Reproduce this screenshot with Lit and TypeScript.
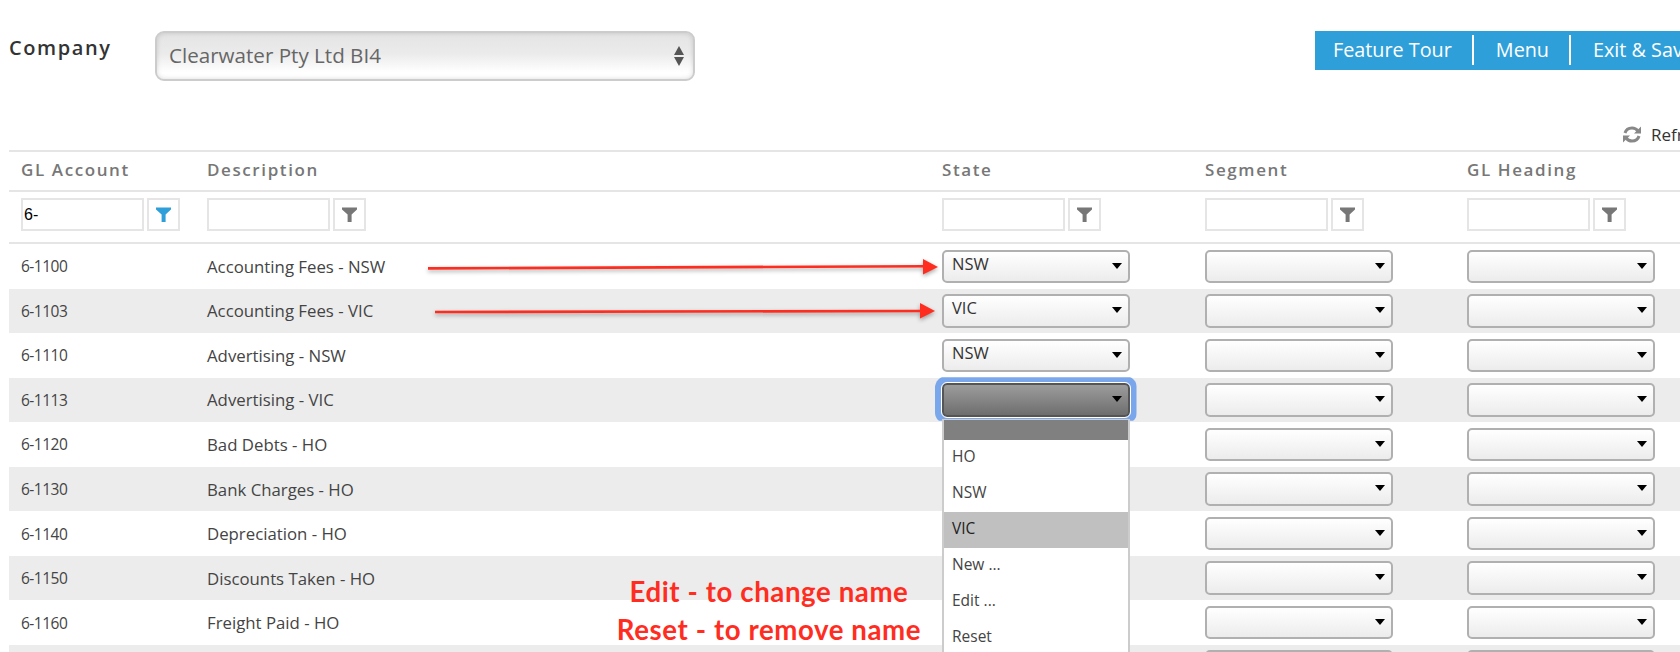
import { LitElement, html, css, svg } from "lit";
import { customElement } from "lit/decorators.js";

const ROWS: [string, string, string][] = [
  ["6-1100", "Accounting Fees - NSW", "NSW"],
  ["6-1103", "Accounting Fees - VIC", "VIC"],
  ["6-1110", "Advertising - NSW", "NSW"],
  ["6-1113", "Advertising - VIC", ""],
  ["6-1120", "Bad Debts - HO", ""],
  ["6-1130", "Bank Charges - HO", ""],
  ["6-1140", "Depreciation - HO", ""],
  ["6-1150", "Discounts Taken - HO", ""],
  ["6-1160", "Freight Paid - HO", ""],
  ["", "", ""],
];

const funnel = (active = false) => html`<svg class="funnel ${active ? "on" : ""}" viewBox="0 0 15 15" width="15" height="15"><path d="M0 0.5H15V2.5L9.6 7.5V15H5.6V7.5L0 2.5Z" fill="currentColor"/></svg>`;

@customElement("app-root")
export class AppRoot extends LitElement {
  static styles = css`
    :host { display: block; width: 1680px; height: 652px; overflow: hidden; position: relative; background: #fff;
      font-family: "Open Sans", "Noto Sans", sans-serif; color: #444; }
    .top { display: flex; align-items: flex-start; padding: 31px 0 0 9px; height: 39px; }
    .top > * { flex: none; }
    .company { width: 146px; font-size: 20px; font-weight: 600; letter-spacing: 1.6px; color: #333; line-height: 34px; }
    .csel { box-sizing: border-box; width: 540px; height: 50px; border: 2px solid #ccc; border-radius: 9px;
      background: linear-gradient(#e4e4e4 0%, #ebebeb 45%, #fff 85%); box-shadow: inset 0 0 5px rgba(0,0,0,.14);
      display: flex; align-items: center; justify-content: space-between; padding: 0 9px 2px 12px; font-size: 20.6px; color: #666; }
    .updown { display: flex; flex-direction: column; gap: 2px; margin-top: 2px; }
    .bar { width: 380px; margin-left: 620px; height: 39px; background: #2e9fd9; color: #fff; display: flex; align-items: center; font-size: 19.8px; box-sizing: border-box; padding: 0 0 1px 18px; white-space: nowrap; }
    .bar span { display: block; flex: none; line-height: 30px; }
    .bar span + span { border-left: 2px solid #fff; margin-left: 20px; padding-left: 22px; }
    .refresh { display: flex; align-items: center; gap: 10px; height: 21px; margin-top: 54px; padding-left: 1623px; font-size: 17px; color: #333; white-space: nowrap; margin-bottom: 5px; }
    .refresh > * { flex: none; }
    .table { margin-left: 9px; }
    .row { display: grid; grid-template-columns: 186px 735px 263px 262px 1fr; padding-left: 12px; align-items: center; }
    .head { height: 42px; box-sizing: border-box; border-top: 2px solid #e5e5e5; border-bottom: 2px solid #e5e5e5; padding-bottom: 4px; font-size: 17px; font-weight: 600; letter-spacing: 1.6px; color: #777; }
    .filters { height: 52px; box-sizing: border-box; border-bottom: 2px solid #e5e5e5; align-items: start; padding-top: 6px; }
    .filter { display: flex; gap: 3px; }
    .inp { box-sizing: border-box; width: 123px; height: 33px; border: 2px solid #e5e5e5; font: 16px "Liberation Sans", sans-serif; color: #000; line-height: 29px; padding-left: 1px; }
    .fbtn { box-sizing: border-box; width: 33px; height: 33px; border: 2px solid #e5e5e5; display: flex; align-items: center; justify-content: center; }
    .funnel { color: #777; }
    .funnel.on { color: #2e9fd9; }
    .data { height: 44.55px; font-size: 15.5px; color: #444; }
    .data:nth-of-type(even) { background: #ececec; }
    .acct { letter-spacing: -.5px; }
    .desc { font-size: 16.8px; }
    .cell { position: relative; }
    .sel { box-sizing: border-box; width: 187.5px; height: 33.5px; border: 2px solid #b0b0b0; border-radius: 5px; background: linear-gradient(#fff, #ececec); display: flex; justify-content: space-between; padding: 0 6px 0 8px; font-size: 16.5px; line-height: 24px; color: #333; }
    .caret { width: 0; height: 0; border: 5.5px solid transparent; border-top: 6px solid #000; border-bottom: 0; margin-top: 11px; }
    .sel.open { background: linear-gradient(#9c9c9c, #6e6e6e); border-color: #555; outline: 1px solid #fff; box-shadow: 0 0 0 7px #7aa7ec; clip-path: inset(-6px -7px -4px -7px); }
    .menu { position: absolute; left: 0; top: 36px; width: 188px; box-sizing: border-box; border: 2px solid #ccc; border-top-width: 1px; border-bottom: 0; background: #fff; z-index: 2; }
    .opt { height: 36px; line-height: 32px; padding-left: 8px; font-size: 15.5px; color: #444; }
    .opt.blank { height: 20px; background: #808080; }
    .opt.cur { background: #c0c0c0; color: #222; }
    .arrows { position: absolute; left: 0; top: 0; pointer-events: none; z-index: 3; filter: drop-shadow(0 2px 2px rgba(0,0,0,.35)); }
    .note { position: absolute; left: 569px; width: 400px; text-align: center; font-family: Lato, sans-serif; font-weight: 700; font-size: 27.6px; letter-spacing: .6px; color: #ff2d1f; z-index: 3; line-height: 30px; white-space: nowrap; }
    .n1 { top: 577px; }
    .n2 { top: 615px; }
  `;

  private selectCell(value: string, open = false, menu = false) {
    return html`<div class="cell">
      <div class="sel ${open ? "open" : ""}"><span>${value}</span><i class="caret"></i></div>
      ${menu ? html`<div class="menu">
        <div class="opt blank"></div>
        <div class="opt">HO</div><div class="opt">NSW</div><div class="opt cur">VIC</div>
        <div class="opt">New ...</div><div class="opt">Edit ...</div><div class="opt">Reset</div>
      </div>` : ""}
    </div>`;
  }

  render() {
    return html`
      <div class="top">
        <div class="company">Company</div>
        <div class="csel"><span>Clearwater Pty Ltd BI4</span>
          <span class="updown">
            <svg width="10" height="9" viewBox="0 0 10 9"><path d="M5 0L10 9H0Z" fill="#555"/></svg>
            <svg width="10" height="9" viewBox="0 0 10 9"><path d="M0 0H10L5 9Z" fill="#555"/></svg>
          </span></div>
        <div class="bar"><span>Feature Tour</span><span>Menu</span><span>Exit &amp; Save</span></div>
      </div>
      <div class="refresh">
        <svg width="18" height="17" viewBox="0 0 18 17" fill="none" stroke="#888" stroke-width="3">
          <path d="M2 7C3 3.5 6 2 9 2C11.5 2 13.5 3 15 5"/><path d="M16 10C15 13.5 12 15 9 15C6.500 15 4.500 14 3 12"/>
          <path d="M18 0.500V7.500H11Z" fill="#888" stroke="none"/><path d="M0 16.500V9.500H7Z" fill="#888" stroke="none"/>
        </svg>
        <span>Refresh</span>
      </div>
      <div class="table">
        <div class="row head"><div>GL Account</div><div>Description</div><div>State</div><div>Segment</div><div>GL Heading</div></div>
        <div class="row filters">
          ${[true, false, false, false, false].map((on, i) => html`<div class="filter">
            <div class="inp">${i === 0 ? "6-" : ""}</div><div class="fbtn">${funnel(on)}</div></div>`)}
        </div>
        <div class="rows">
        ${ROWS.map(([a, d, s], i) => html`<div class="row data">
          <div class="acct">${a}</div><div class="desc">${d}</div>
          ${this.selectCell(s, i === 3, i === 3)}
          ${this.selectCell("")}
          ${this.selectCell("")}
        </div>`)}
        </div>
      </div>
      <svg class="arrows" width="1680" height="652">
        ${svg`<path d="M428 268.400L924 266.200" stroke="#ff2d1f" stroke-width="2.600"/><path d="M923 259L938 267L923 274.500Z" fill="#ff2d1f"/>
        <path d="M435 312L921 311" stroke="#ff2d1f" stroke-width="2.600"/><path d="M920 303L935 311L920 318.500Z" fill="#ff2d1f"/>`}
      </svg>
      <div class="note n1">Edit - to change name</div>
      <div class="note n2">Reset - to remove name</div>
    `;
  }
}
